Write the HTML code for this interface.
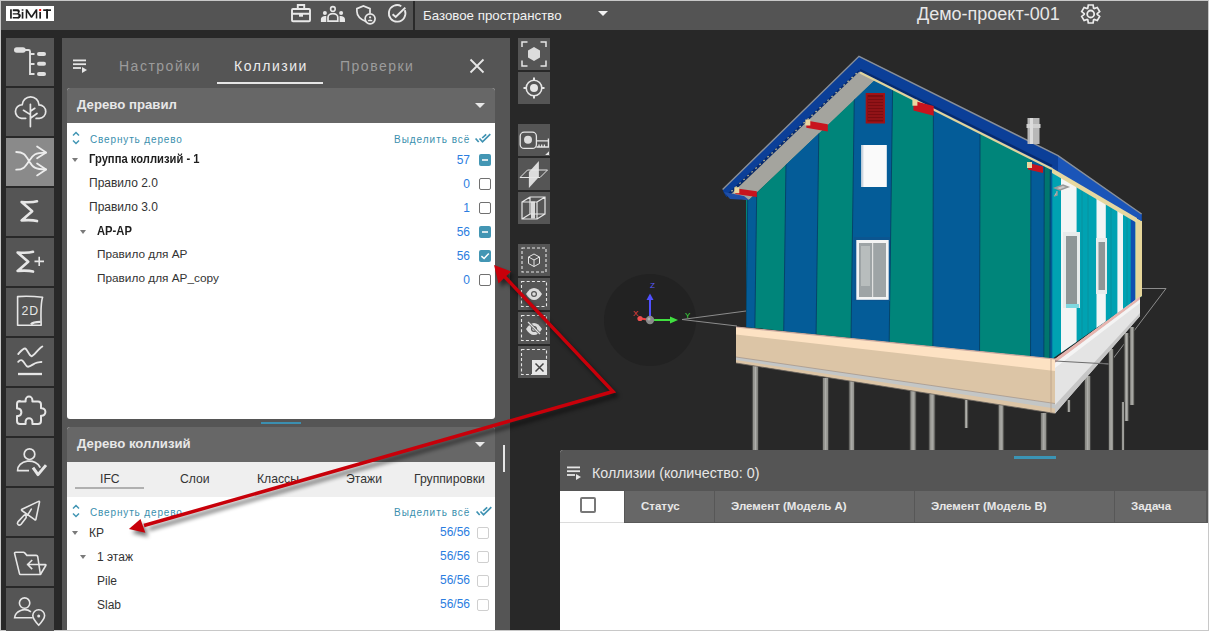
<!DOCTYPE html>
<html><head><meta charset="utf-8">
<style>
*{box-sizing:border-box;margin:0;padding:0}
html,body{width:1209px;height:631px;overflow:hidden;background:#c8c8c8;font-family:"Liberation Sans",sans-serif}
.a{position:absolute}
#hdr{left:1px;top:1px;width:1207px;height:29px;background:#545454}
#main{left:1px;top:30px;width:1207px;height:600px;background:#282828}
.sb{position:absolute;left:6px;width:48px;height:48px;background:#555}
.sb svg{position:absolute;left:0;top:0}
.tb{position:absolute;left:518px;width:32px;height:32px;background:#555}
.tb svg{position:absolute;left:0;top:0}
.t{position:absolute;white-space:nowrap;line-height:1}
.row{position:absolute;white-space:nowrap;line-height:1;font-size:12px;color:#333}
.num{position:absolute;white-space:nowrap;line-height:1;font-size:12px;color:#2b7de0;text-align:right}
.cb{position:absolute;width:12px;height:12px;border:1.8px solid #707070;border-radius:2px;background:#fff}
.cbl{position:absolute;width:12px;height:12px;border:1.5px solid #cfcfcf;border-radius:2px;background:#fff}
.cbf{position:absolute;width:12px;height:12px;border-radius:2px;background:#4396b4}
.caret{position:absolute;width:0;height:0;border-left:3.5px solid transparent;border-right:3.5px solid transparent;border-top:4px solid #7a7a7a}
</style></head><body>
<div id="hdr" class="a"></div>
<div id="main" class="a"></div>

<!-- logo -->
<div class="a" style="left:6px;top:6px;width:48px;height:15px;background:#fff"></div>
<svg class="a" style="left:6px;top:6px" width="48" height="15" viewBox="0 0 48 15">
 <g fill="#1e1e1e">
  <rect x="4.1" y="3.3" width="1.7" height="9.3"/>
  <path d="M6.8 3.3h4.2a2.6 2.1 0 0 1 1.6 3.9 2.8 2.7 0 0 1-1.4 5.4H6.8v-1.5h4.4a1.35 1.25 0 0 0 0-2.5H6.8V7.3h4a1.1 1 0 0 0 0-2.1H6.8z"/>
  <rect x="15.7" y="3.3" width="1.7" height="1.4"/>
  <rect x="15.7" y="5.9" width="1.7" height="6.7"/>
  <path d="M19.7 12.6V3.3h1.6l4.2 6.5 4.3-6.5h1.5v9.3h-1.5V6.2l-3.7 5.6h-1.2l-3.7-5.6v6.4z"/>
  <rect x="33.3" y="5.9" width="1.7" height="6.7"/>
  <rect x="37.2" y="3.3" width="7.8" height="1.7"/>
  <rect x="40.1" y="3.3" width="1.9" height="9.3"/>
 </g>
 <rect x="33.2" y="3" width="1.9" height="2" fill="#f00"/>
</svg>

<!-- header icons -->
<svg class="a" style="left:280px;top:0" width="135" height="30" viewBox="280 0 135 30" fill="none" stroke="#e8e8e8" stroke-width="1.9">
 <rect x="292" y="9" width="18" height="12.2" rx="1"/>
 <path d="M297.8 9V5h6.4v4M292 13.8h18"/>
 <rect x="299" y="13.5" width="4" height="3.2" fill="#e8e8e8" stroke="none"/>
 <circle cx="332.9" cy="8.9" r="2.3" stroke-width="1.6"/>
 <path d="M328 21.2v-4a4.9 3.6 0 0 1 9.8 0v4z" stroke-width="1.7"/>
 <circle cx="324.9" cy="12.9" r="2" fill="#e8e8e8" stroke="none"/>
 <circle cx="341.1" cy="12.9" r="2" fill="#e8e8e8" stroke="none"/>
 <path d="M320.9 22v-2.5c0-2 1.5-3.4 5.4-3.4V22zM345 22v-2.5c0-2-1.5-3.4-5.4-3.4V22z" fill="#e8e8e8" stroke="none"/>
 <path d="M366.3 21.8c-5.5-2.2-9.4-5.6-9.4-10.5V8.6l6.5-2.7 6.6 2.7v4.6" stroke-width="1.7"/>
 <circle cx="370.1" cy="18.8" r="5" stroke-width="1.7"/>
 <circle cx="370.1" cy="17.3" r="1.1" fill="#e8e8e8" stroke="none"/>
 <path d="M367.6 21.3a2.5 1.7 0 0 1 5 0z" fill="#e8e8e8" stroke="none"/>
 <path d="M404.8 10.2a8.3 8.3 0 1 1-3.5-4" stroke-width="1.8"/>
 <path d="M392.6 14.2l3.1 2.8 9.6-9.4" stroke-width="2"/>
</svg>
<div class="a" style="left:413px;top:1px;width:2px;height:29px;background:#2a2a2a"></div>
<div class="t" style="left:423px;top:9px;font-size:13.3px;color:#f2f2f2">Базовое пространство</div>
<div class="a" style="left:598px;top:11px;width:0;height:0;border-left:5px solid transparent;border-right:5px solid transparent;border-top:5.5px solid #f2f2f2"></div>
<div class="t" style="left:917px;top:5px;font-size:18px;color:#e8e8e8">Демо-проект-001</div>
<svg class="a" style="left:1070px;top:0" width="40" height="30" viewBox="1070 0 40 30">
 <path fill="none" stroke="#ececec" stroke-width="1.7" stroke-linejoin="miter" d="M1087.80 8.18 L1088.30 5.02 L1093.10 5.02 L1093.60 8.18 L1094.29 8.58 L1097.28 7.43 L1099.68 11.59 L1097.19 13.60 L1097.19 14.40 L1099.68 16.41 L1097.28 20.57 L1094.29 19.42 L1093.60 19.82 L1093.10 22.98 L1088.30 22.98 L1087.80 19.82 L1087.11 19.42 L1084.12 20.57 L1081.72 16.41 L1084.21 14.40 L1084.21 13.60 L1081.72 11.59 L1084.12 7.43 L1087.11 8.58Z"/>
 <circle cx="1090.7" cy="14" r="3.5" fill="none" stroke="#ececec" stroke-width="1.8"/>
</svg>

<!-- SIDEBAR -->
<div class="sb" style="top:38px"><svg width="48" height="48" viewBox="0 0 48 48" fill="#e0e0e0" stroke="#e0e0e0">
 <rect x="8" y="9.3" width="11.7" height="5.5" rx="2.75" stroke="none"/>
 <path d="M18 12h4.5a1.5 1.5 0 0 1 1.5 1.5V36h4.5M24 16h4.5M24 26h4.5" fill="none" stroke-width="1.9"/>
 <rect x="31" y="14" width="9" height="4" rx="2" stroke="none"/>
 <rect x="31" y="23.8" width="9" height="4" rx="2" stroke="none"/>
 <rect x="31" y="34" width="9" height="4" rx="2" stroke="none"/>
</svg></div>
<div class="sb" style="top:88px"><svg width="48" height="48" viewBox="0 0 48 48" fill="none" stroke="#e6e6e6" stroke-width="1.7" stroke-linecap="round">
 <path d="M19.7 30.3H15.5A6.8 6.8 0 0 1 16.21 16.74A8.4 8.4 0 0 1 32.99 16.81A6.8 6.8 0 0 1 33.3 30.4H30.1"/>
 <path d="M24.4 16.3V38.6M17.5 22.3l6.9 4.3M24.4 23.2l4.4-2.9M24.4 30.2l6.6-4.7"/>
</svg></div>
<div class="sb" style="top:138px;background:#8a8a8a"><svg width="48" height="48" viewBox="0 0 48 48" fill="none" stroke="#ececec" stroke-width="1.8" stroke-linecap="round" stroke-linejoin="round">
 <path d="M10.2 14c7 0 9 2.5 12.8 9s6 8.4 17 8.4M10.2 31.7c7 0 9-2.5 12.8-8.7s6-8.4 17-8.4"/>
 <path d="M31.1 8.4l9 6.2-9 5.7M31.1 25.5l9 5.9-9 6"/>
</svg></div>
<div class="sb" style="top:188px"><svg width="48" height="48" viewBox="0 0 48 48" fill="none" stroke="#e6e6e6" stroke-width="2.6" stroke-linejoin="round" stroke-linecap="round">
 <path d="M31 13.3C27 14.5 20 14.3 15.6 14L26.2 23.2L15.6 32.4C20 32.1 27 31.9 31 33.1"/>
</svg></div>
<div class="sb" style="top:238px"><svg width="48" height="48" viewBox="0 0 48 48" fill="none" stroke="#e6e6e6" stroke-width="2.6" stroke-linejoin="round" stroke-linecap="round">
 <path d="M27 13.8C23 15 16 14.8 11.6 14.5L22.2 23.7L11.6 32.9C16 32.6 23 32.4 27 33.6"/>
 <path d="M28.5 23.4h9.5M33.2 18.7v9.4" stroke-width="1.6" stroke-linecap="butt"/>
</svg></div>
<div class="sb" style="top:288px"><svg width="48" height="48" viewBox="0 0 48 48" fill="none" stroke="#e6e6e6" stroke-width="1.6" stroke-linejoin="round">
 <path d="M11.6 8.6C20 8 28 8.3 36.6 9.2C35 14 34.6 22 35.2 37.3H11.6z"/>
 <path d="M25 36.3C27 34.2 30 33.8 34.6 33.9" stroke-width="2.4"/>
 <text x="15.6" y="27" font-family="Liberation Sans" font-size="12.3" letter-spacing="0.8" fill="#e6e6e6" stroke="none">2D</text>
</svg></div>
<div class="sb" style="top:338px"><svg width="48" height="48" viewBox="0 0 48 48" fill="none" stroke="#e6e6e6" stroke-width="1.9" stroke-linecap="round" stroke-linejoin="round">
 <path d="M12.3 16C15 13 17 10.3 19 10.5C21 10.7 23 17.5 25.3 18.2C27.5 18.5 32 11 36.3 8.5"/>
 <path d="M12.2 23.8C13.5 22.3 14.5 21.8 16 22.3C18.5 23.3 19.5 29 22 28.8C25 28.5 28 25.2 31 24.6C33 24.2 34 24.2 35.4 24"/>
 <path d="M12 36h24" stroke-linecap="butt" stroke-width="2.3"/>
</svg></div>
<div class="sb" style="top:388px"><svg width="48" height="48" viewBox="0 0 48 48" fill="none" stroke="#e6e6e6" stroke-width="2" stroke-linejoin="round">
 <path d="M14 13.6h5.6v-1.6a3.4 3.4 0 0 1 6.8 0v1.6h5.6a3 3 0 0 1 3 3v3.6h.6a3.8 3.8 0 0 1 0 7.6h-.6v5.1a3 3 0 0 1-3 3h-5.6v-2.3a3.4 3.4 0 0 0-6.8 0v2.3H14a3 3 0 0 1-3-3v-4.8h1.2a3.8 3.8 0 0 0 0-7.5H11v-4.6a3 3 0 0 1 3-3z"/>
</svg></div>
<div class="sb" style="top:438px"><svg width="48" height="48" viewBox="0 0 48 48" fill="none" stroke="#e6e6e6" stroke-width="1.7">
 <circle cx="23.5" cy="16.2" r="5.3"/>
 <path d="M23 32.6H11.6A11.6 9.2 0 0 1 34.3 29.6"/>
 <path d="M27 29.6l5 7 8-9.5" stroke-width="3" stroke-linejoin="round"/>
</svg></div>
<div class="sb" style="top:488px"><svg width="48" height="48" viewBox="0 0 48 48" fill="none" stroke="#e6e6e6" stroke-width="1.6" stroke-linejoin="round" stroke-linecap="round">
 <path d="M16 21.3L32.6 13.4C33.2 13.1 33.6 13.5 33.5 14.1L29.9 31.3C29.8 32 29.2 32.2 28.7 31.7L15.8 22.5C15.3 22.1 15.4 21.6 16 21.3z"/>
 <path d="M25.3 21.2L21.6 27.2L19.3 26.8"/>
 <path d="M17.6 27.7c.9-.9 2.3-.6 2.6.6.2.6 0 1.2-.3 1.6l-4.8 6.4c-.8 1-2.3 1.1-3.1.2-.7-.7-.7-1.8-.1-2.6z"/>
</svg></div>
<div class="sb" style="top:538px"><svg width="48" height="48" viewBox="0 0 48 48" fill="none" stroke="#e6e6e6" stroke-width="1.6" stroke-linejoin="round">
 <path d="M9.8 14.2h7.6c.6 0 1 .3 1.3.7l2.2 2.5h9.3c.8 0 1.3.4 1.5 1.1L34.4 36.5H14.6c-.6 0-1-.3-1.1-.9L8.6 15.6c-.2-.8.4-1.4 1.2-1.4z"/>
 <path d="M33.2 26.6h6.2c.5 0 .7.5.4.9l-5.4 9"/>
 <path d="M20.8 26.5h12.8M26.2 22l-4.6 4.5 4.6 4.6"/>
</svg></div>
<div class="sb" style="top:588px"><svg width="48" height="48" viewBox="0 0 48 48" fill="none" stroke="#e6e6e6" stroke-width="1.6">
 <circle cx="18.6" cy="15.1" r="5.2"/>
 <path d="M26.6 29.8H8.6A10 8.8 0 0 1 25 23.8"/>
 <path d="M38.6 27.6c0-3.3-2.6-5.8-5.9-5.8s-5.9 2.5-5.9 5.8c0 3 2.6 6.2 5.9 9.6 3.3-3.4 5.9-6.6 5.9-9.6z"/>
 <circle cx="32.7" cy="27.9" r="1.5" fill="#e6e6e6" stroke="none"/>
</svg></div>

<!-- PANEL -->
<div class="a" style="left:62px;top:38px;width:448px;height:592px;background:#555"></div>
<svg class="a" style="left:72px;top:58px" width="18" height="16" viewBox="0 0 18 16" fill="#e6e6e6">
 <rect x="1" y="1.5" width="13" height="1.8"/><rect x="1" y="5.3" width="13" height="1.8"/><rect x="1" y="9.1" width="8" height="1.8"/>
 <path d="M10 9v6l5-3z"/>
</svg>
<div class="t" style="left:119px;top:59px;font-size:14px;letter-spacing:1.5px;color:#9c9c9c">Настройки</div>
<div class="t" style="left:234px;top:59px;font-size:14px;letter-spacing:1.5px;color:#ececec">Коллизии</div>
<div class="t" style="left:340px;top:59px;font-size:14px;letter-spacing:1.5px;color:#9c9c9c">Проверки</div>
<div class="a" style="left:217px;top:82px;width:106px;height:2px;background:#e6e6e6"></div>
<svg class="a" style="left:469px;top:58px" width="16" height="16" viewBox="0 0 16 16"><path d="M1.5 1.5l13 13M14.5 1.5l-13 13" stroke="#e6e6e6" stroke-width="1.8"/></svg>

<!-- sub-panel 1 -->
<div class="a" style="left:67px;top:88px;width:428px;height:331px;background:#fff;border-radius:3px;overflow:hidden">
 <div class="a" style="left:0;top:0;width:428px;height:35px;background:#676767"></div>
</div>
<div class="t" style="left:77px;top:98px;font-size:13.2px;font-weight:bold;color:#e8e8e8">Дерево правил</div>
<div class="a" style="left:475px;top:103px;border-left:5px solid transparent;border-right:5px solid transparent;border-top:5px solid #e8e8e8"></div>

<svg class="a" style="left:71px;top:131px" width="10" height="14" viewBox="0 0 10 14" fill="none" stroke="#4396b4" stroke-width="1.5"><path d="M2 4.5l3-3 3 3M2 9.5l3 3 3-3"/></svg>
<div class="t" style="left:90px;top:134.7px;font-size:10px;letter-spacing:0.85px;color:#3a8fae">Свернуть дерево</div>
<div class="t" style="left:394px;top:134.7px;font-size:10px;letter-spacing:0.97px;color:#3a8fae">Выделить всё</div>
<svg class="a" style="left:474px;top:132px" width="18" height="12" viewBox="0 0 18 12" fill="none" stroke="#3f92b2" stroke-width="1.7"><path d="M1.6 6.5L4.7 10M5.5 6.5L8.5 9.8L16.3 2.2M8.2 6L12.2 2.3"/></svg>

<div class="caret" style="left:72px;top:158px"></div>
<div class="row" style="left:89px;top:153px;font-weight:bold;font-size:12.2px;color:#1e1e1e;transform:scaleX(0.92);transform-origin:0 0">Группа коллизий - 1</div>
<div class="num" style="left:420px;width:50px;top:154px">57</div>
<div class="cbf" style="left:479px;top:154px"><div class="a" style="left:2.5px;top:5px;width:6.5px;height:2px;background:#d6e6ec"></div></div>

<div class="row" style="left:89px;top:177px">Правило 2.0</div>
<div class="num" style="left:420px;width:50px;top:178px">0</div>
<div class="cb" style="left:479px;top:178px"></div>

<div class="row" style="left:89px;top:201px">Правило 3.0</div>
<div class="num" style="left:420px;width:50px;top:202px">1</div>
<div class="cb" style="left:479px;top:202px"></div>

<div class="caret" style="left:80px;top:230px"></div>
<div class="row" style="left:97px;top:225px;font-weight:bold;font-size:12.2px;color:#1e1e1e;transform:scaleX(0.92);transform-origin:0 0">АР-АР</div>
<div class="num" style="left:420px;width:50px;top:226px">56</div>
<div class="cbf" style="left:479px;top:226px"><div class="a" style="left:2.5px;top:5px;width:6.5px;height:2px;background:#d6e6ec"></div></div>

<div class="row" style="left:97px;top:249px;font-size:11.8px">Правило для АР</div>
<div class="num" style="left:420px;width:50px;top:250px">56</div>
<div class="cbf" style="left:479px;top:250px"><svg style="display:block" width="12" height="12" viewBox="0 0 12 12"><path d="M2.4 6.1L5.1 8.5L9.8 3.4" fill="none" stroke="#fff" stroke-width="1.5"/></svg></div>

<div class="row" style="left:97px;top:273px;font-size:11.8px">Правило для АР_copy</div>
<div class="num" style="left:420px;width:50px;top:274px">0</div>
<div class="cb" style="left:479px;top:274px"></div>

<div class="a" style="left:261px;top:422px;width:40px;height:2px;background:#3b8fb0"></div>

<!-- sub-panel 2 -->
<div class="a" style="left:67px;top:427px;width:428px;height:203px;background:#fff;border-radius:3px 3px 0 0;overflow:hidden">
 <div class="a" style="left:0;top:0;width:428px;height:35px;background:#676767"></div>
 <div class="a" style="left:0;top:35px;width:428px;height:35px;background:#efefef"></div>
</div>
<div class="t" style="left:77px;top:437px;font-size:13.2px;font-weight:bold;color:#e8e8e8">Дерево коллизий</div>
<div class="a" style="left:475px;top:442px;border-left:5px solid transparent;border-right:5px solid transparent;border-top:5px solid #e8e8e8"></div>
<div class="a" style="left:503px;top:445px;width:2px;height:27px;background:#e6e6e6"></div>

<div class="t" style="left:100px;top:473px;font-size:12.2px;color:#333">IFC</div>
<div class="a" style="left:75px;top:487px;width:69px;height:2px;background:#b0b0b0"></div>
<div class="t" style="left:180px;top:473px;font-size:12.2px;color:#333">Слои</div>
<div class="t" style="left:257px;top:473px;font-size:12.2px;color:#333">Классы</div>
<div class="t" style="left:346px;top:473px;font-size:12.2px;color:#333">Этажи</div>
<div class="t" style="left:414px;top:473px;font-size:12.2px;color:#333">Группировки</div>

<svg class="a" style="left:71px;top:504px" width="10" height="14" viewBox="0 0 10 14" fill="none" stroke="#4396b4" stroke-width="1.5"><path d="M2 4.5l3-3 3 3M2 9.5l3 3 3-3"/></svg>
<div class="t" style="left:90px;top:507.7px;font-size:10px;letter-spacing:0.85px;color:#3a8fae">Свернуть дерево</div>
<div class="t" style="left:394px;top:507.7px;font-size:10px;letter-spacing:0.97px;color:#3a8fae">Выделить всё</div>
<svg class="a" style="left:475px;top:505px" width="18" height="12" viewBox="0 0 18 12" fill="none" stroke="#3f92b2" stroke-width="1.7"><path d="M1.6 6.5L4.7 10M5.5 6.5L8.5 9.8L16.3 2.2M8.2 6L12.2 2.3"/></svg>

<div class="caret" style="left:72px;top:531px"></div>
<div class="row" style="left:89px;top:527px">КР</div>
<div class="num" style="left:400px;width:70px;top:526px">56/56</div>
<div class="cbl" style="left:477px;top:527px"></div>

<div class="caret" style="left:80px;top:555px"></div>
<div class="row" style="left:97px;top:551px">1 этаж</div>
<div class="num" style="left:400px;width:70px;top:550px">56/56</div>
<div class="cbl" style="left:477px;top:551px"></div>

<div class="row" style="left:97px;top:575px">Pile</div>
<div class="num" style="left:400px;width:70px;top:574px">56/56</div>
<div class="cbl" style="left:477px;top:575px"></div>

<div class="row" style="left:97px;top:599px">Slab</div>
<div class="num" style="left:400px;width:70px;top:598px">56/56</div>
<div class="cbl" style="left:477px;top:599px"></div>

<!-- HOUSE placeholder -->
<!-- HOUSE -->
<svg class="a" style="left:0;top:0" width="1209" height="631" viewBox="0 0 1209 631">
<circle cx="650" cy="320" r="46" fill="#222"/>
<g stroke="#8c8c8c" stroke-width="1" fill="none">
<path d="M682 319.5L746 311M682 319.5L737 326"/>
<path d="M1142 288.5H1166L1109 364L1055 359"/>
</g>
<rect x="751.8" y="366" width="7" height="84" fill="#3c3c3a"/>
<rect x="752.8" y="366" width="5" height="84" fill="#94948f"/>
<rect x="754.8" y="366" width="1.2" height="84" fill="#b0b0ac"/>
<rect x="822.1" y="378" width="7" height="72" fill="#3c3c3a"/>
<rect x="823.1" y="378" width="5" height="72" fill="#94948f"/>
<rect x="825.1" y="378" width="1.2" height="72" fill="#b0b0ac"/>
<rect x="848.5" y="381" width="6.5" height="69" fill="#3c3c3a"/>
<rect x="849.5" y="381" width="4.5" height="69" fill="#94948f"/>
<rect x="851.2" y="381" width="1.2" height="69" fill="#b0b0ac"/>
<rect x="909.5" y="391" width="7" height="59" fill="#3c3c3a"/>
<rect x="910.5" y="391" width="5" height="59" fill="#94948f"/>
<rect x="912.5" y="391" width="1.2" height="59" fill="#b0b0ac"/>
<rect x="928.5" y="394" width="7" height="56" fill="#3c3c3a"/>
<rect x="929.5" y="394" width="5" height="56" fill="#94948f"/>
<rect x="931.5" y="394" width="1.2" height="56" fill="#b0b0ac"/>
<rect x="964.0" y="400" width="4.5" height="28" fill="#3c3c3a"/>
<rect x="965.0" y="400" width="2.5" height="28" fill="#94948f"/>
<rect x="965.8" y="400" width="1.2" height="28" fill="#b0b0ac"/>
<rect x="997.8" y="405" width="6.5" height="45" fill="#3c3c3a"/>
<rect x="998.8" y="405" width="4.5" height="45" fill="#94948f"/>
<rect x="1000.5" y="405" width="1.2" height="45" fill="#b0b0ac"/>
<rect x="1040.2" y="413" width="7" height="37" fill="#3c3c3a"/>
<rect x="1041.2" y="413" width="5" height="37" fill="#94948f"/>
<rect x="1043.2" y="413" width="1.2" height="37" fill="#b0b0ac"/>
<rect x="1066.8" y="400" width="4" height="12" fill="#3c3c3a"/>
<rect x="1067.8" y="400" width="2" height="12" fill="#94948f"/>
<rect x="1068.3" y="400" width="1.2" height="12" fill="#b0b0ac"/>
<rect x="1084.1" y="376" width="7" height="74" fill="#3c3c3a"/>
<rect x="1085.1" y="376" width="5" height="74" fill="#94948f"/>
<rect x="1087.1" y="376" width="1.2" height="74" fill="#b0b0ac"/>
<rect x="1108.0" y="349" width="6" height="101" fill="#3c3c3a"/>
<rect x="1109.0" y="349" width="4" height="101" fill="#94948f"/>
<rect x="1110.5" y="349" width="1.2" height="101" fill="#b0b0ac"/>
<rect x="1123.7" y="333" width="5.5" height="88" fill="#3c3c3a"/>
<rect x="1124.7" y="333" width="3.5" height="88" fill="#94948f"/>
<rect x="1125.9" y="333" width="1.2" height="88" fill="#b0b0ac"/>
<rect x="1129.2" y="327" width="5.5" height="78" fill="#3c3c3a"/>
<rect x="1130.2" y="327" width="3.5" height="78" fill="#94948f"/>
<rect x="1131.5" y="327" width="1.2" height="78" fill="#b0b0ac"/>
<rect x="1121.2" y="402" width="3.5" height="48" fill="#3c3c3a"/>
<rect x="1122.2" y="402" width="1.5" height="48" fill="#94948f"/>
<rect x="1122.5" y="402" width="1.2" height="48" fill="#b0b0ac"/>
<polygon points="722.6,189.5 859.0,56.3 860.0,71.0 726.4,197.0 724.0,193.0" fill="#0b3f98"/>
<polyline points="727.0,196.0 860.0,71.0" fill="none" stroke="#072a6e" stroke-width="2.6"/>
<polygon points="728.0,197.0 860.0,71.0 876.0,80.0 749.0,200.0" fill="#a4a49e"/>
<polyline points="727.5,195.0 859.5,70.5" fill="none" stroke="#d6cc98" stroke-width="1.2" stroke-dasharray="1.5 4"/>
<polygon points="724.0,192.0 730.0,199.0 749.0,200.0 744.0,196.0" fill="#1f4fa8"/>
<defs><clipPath id="fw"><polygon points="746.0,200.0 749.0,200.0 876.0,79.0 1054.0,169.5 1054.0,359.0 746.0,327.0"/></clipPath>
<clipPath id="sw"><polygon points="1052.0,170.0 1142.0,221.0 1142.0,296.0 1052.0,359.0"/></clipPath></defs>
<g clip-path="url(#fw)">
<rect x="740" y="60" width="320" height="310" fill="#00857a"/>
<polygon points="749.6,60.0 758.5,60.0 754.3,370.0 745.4,370.0" fill="#045c98"/>
<polygon points="787.4,60.0 819.8,60.0 815.6,370.0 783.2,370.0" fill="#045c98"/>
<polygon points="854.8,60.0 893.0,60.0 888.8,370.0 850.6,370.0" fill="#045c98"/>
<polygon points="933.5,60.0 980.2,60.0 979.5,370.0 932.8,370.0" fill="#045c98"/>
<polygon points="1031.2,60.0 1044.5,60.0 1043.8,370.0 1030.5,370.0" fill="#045c98"/>
<polygon points="1050.5,60.0 1054.5,60.0 1053.8,370.0 1049.8,370.0" fill="#045c98"/>
<polygon points="1044,60 1050,60 1050,370 1044,370" fill="#00766e"/>
<line x1="749.6" y1="60" x2="745.4" y2="370" stroke="#063f66" stroke-width="0.9"/>
<line x1="758.5" y1="60" x2="754.3" y2="370" stroke="#063f66" stroke-width="0.9"/>
<line x1="787.4" y1="60" x2="783.2" y2="370" stroke="#063f66" stroke-width="0.9"/>
<line x1="819.8" y1="60" x2="815.6" y2="370" stroke="#063f66" stroke-width="0.9"/>
<line x1="854.8" y1="60" x2="850.6" y2="370" stroke="#063f66" stroke-width="0.9"/>
<line x1="893.0" y1="60" x2="888.8" y2="370" stroke="#063f66" stroke-width="0.9"/>
<line x1="933.5" y1="60" x2="932.8" y2="370" stroke="#063f66" stroke-width="0.9"/>
<line x1="980.2" y1="60" x2="979.5" y2="370" stroke="#063f66" stroke-width="0.9"/>
<line x1="1031.2" y1="60" x2="1030.5" y2="370" stroke="#063f66" stroke-width="0.9"/>
<line x1="1044.5" y1="60" x2="1043.8" y2="370" stroke="#063f66" stroke-width="0.9"/>
<line x1="1050.5" y1="60" x2="1049.8" y2="370" stroke="#063f66" stroke-width="0.9"/>
<line x1="1054.5" y1="60" x2="1053.8" y2="370" stroke="#063f66" stroke-width="0.9"/>
</g>
<g clip-path="url(#sw)">
<rect x="1050" y="160" width="100" height="210" fill="#00a2b2"/>
<rect x="1050" y="160" width="2.3" height="210" fill="#045c98"/>
<rect x="1061" y="160" width="15.6" height="210" fill="#f3f5f5"/>
<rect x="1096.5" y="160" width="9.3" height="210" fill="#f3f5f5"/>
<rect x="1117.4" y="160" width="5.6" height="210" fill="#f3f5f5"/>
<rect x="1130.7" y="160" width="4.7" height="210" fill="#0f4fb0"/>
<rect x="1135.4" y="160" width="6.6" height="210" fill="#e6d69a"/>
<path d="M1082 170V340M1088 170V340M1111 170V340M1127 170V340" stroke="#0a8e9a" stroke-width="0.8"/>
</g>
<polygon points="859.0,56.3 1058.0,155.6 1141.6,214.0 1141.6,221.0 1058.0,172.0 859.0,71.5" fill="#0b3f98"/>
<polygon points="1058.0,155.6 1141.6,214.0 1141.6,221.0 1058.0,175.0" fill="#1a55b8"/>
<polyline points="722.6,189.5 859.0,56.3 1058.0,155.6 1141.6,214.0" fill="none" stroke="#8a9098" stroke-width="1.4"/>
<polyline points="860.0,70.0 1052.0,166.0" fill="none" stroke="#072a6e" stroke-width="2.2"/>
<polyline points="860.0,72.5 1052.0,169.0" fill="none" stroke="#e0d49c" stroke-width="2.2"/>
<polygon points="1052.0,168.0 1137.0,218.0 1137.0,223.0 1052.0,173.0" fill="#e6d8a0"/>
<rect x="1027.5" y="118" width="12" height="26" fill="#b8b8b8"/><rect x="1026.5" y="124" width="14" height="4" fill="#d0d0d0"/><rect x="1030" y="118" width="3" height="26" fill="#dcdcdc"/>
<polygon points="735.3,188.2 756.8,191.3 756.8,197.0 735.3,193.9" fill="#c8141e"/>
<rect x="734.3" y="187.2" width="5" height="6" fill="#ead7a0"/>
<polygon points="806.3,120.5 827.8,124.3 827.8,131.5 806.3,127.7" fill="#c8141e"/>
<rect x="805.3" y="119.5" width="5" height="6" fill="#ead7a0"/>
<polygon points="913.4,100.7 933.7,106.0 933.7,115.7 913.4,110.5" fill="#c8141e"/>
<rect x="912.4" y="99.7" width="5" height="6" fill="#ead7a0"/>
<polygon points="1028.0,163.0 1043.0,166.5 1043.0,173.0 1028.0,169.5" fill="#c8141e"/>
<rect x="1027" y="162" width="5" height="6" fill="#ead7a0"/>
<rect x="865.7" y="93" width="19.3" height="30.5" fill="#a01216"/><rect x="867.5" y="95" width="15.7" height="26.5" fill="#7a0c10"/>
<path d="M868 98h15M868 101h15M868 104h15M868 107h15M868 110h15M868 113h15M868 116h15M868 119h15" stroke="#a81a1e" stroke-width="1"/>
<rect x="861.4" y="145" width="25.4" height="42" fill="#fafafa"/><rect x="861.4" y="145" width="2" height="42" fill="#d0d8e0"/>
<rect x="854" y="237" width="36" height="64" fill="#0b5590"/>
<rect x="856.3" y="240" width="32.4" height="59.8" fill="#f4f4f4"/><rect x="859" y="243" width="27" height="54" fill="#9ea4a6"/><rect x="872" y="243" width="1.2" height="54" fill="#e0e0e0"/><rect x="861" y="246" width="9" height="40" fill="#b8bdbd"/>
<rect x="1063" y="232" width="17" height="76" fill="#e8ecec"/><rect x="1066" y="236" width="11" height="68" fill="#8e9697"/><rect x="1066" y="304" width="13" height="4" fill="#7fd8e0"/>
<rect x="1096" y="238" width="11" height="56" fill="#e8ecec"/><rect x="1098.5" y="242" width="6.5" height="48" fill="#8e9697"/>
<path d="M1055 188l8-3 5 2-8 3zM1057 191v4l-3 1" stroke="#999" stroke-width="1.5" fill="#c8c8c8"/>
<polygon points="736.0,327.0 1055.0,359.0 1055.0,413.5 736.0,363.0" fill="#dcc5a6"/>
<polygon points="736.0,327.0 1055.0,359.0 1055.0,371.0 736.0,334.5" fill="#fde2c3"/>
<polygon points="736.0,357.0 1055.0,403.5 1055.0,408.5 736.0,360.0" fill="#c3c6c6"/>
<polyline points="736.0,327.0 1055.0,359.0" fill="none" stroke="#c8a8a0" stroke-width="1.2"/>
<polyline points="736.0,357.0 1055.0,403.5" fill="none" stroke="#9a8a80" stroke-width="0.6"/>
<polyline points="736.0,363.0 1055.0,413.5" fill="none" stroke="#6a6560" stroke-width="0.8"/>
<path d="M1051 359V413" stroke="#b8a088" stroke-width="0.8"/>
<polygon points="1055.0,359.0 1140.0,296.5 1140.0,316.0 1055.0,413.5" fill="#e4e4e4"/>
<polygon points="1055.0,359.0 1140.0,296.5 1140.0,299.5 1055.0,363.0" fill="#e6b4ae"/>
<polygon points="1055.0,363.0 1140.0,299.5 1140.0,303.0 1055.0,368.0" fill="#f4f4f4"/>
<polygon points="1055.0,405.0 1140.0,313.0 1140.0,316.0 1055.0,413.5" fill="#c6c6c6"/>
<path d="M1055 361L1109 364" stroke="#6c6c6c" stroke-width="1"/>
<g>
<path d="M650 320V298" stroke="#5050ff" stroke-width="2"/><path d="M646.5 300L650 293.5L653.5 300z" fill="#5050ff"/>
<text x="650" y="288" font-family="Liberation Sans" font-size="8" fill="#5a5aff">Z</text>
<path d="M650 320H672" stroke="#40e040" stroke-width="2"/><path d="M670 316.5L678 320L670 323.5z" fill="#40e040"/>
<text x="685" y="318" font-family="Liberation Sans" font-size="8" fill="#40e040">Y</text>
<path d="M650 320L638 318" stroke="#f04040" stroke-width="2"/><circle cx="640" cy="318.5" r="2.6" fill="#f05050"/>
<text x="633" y="316" font-family="Liberation Sans" font-size="8" fill="#f04040">X</text>
<circle cx="650" cy="320" r="4.2" fill="#8a8a8a"/><circle cx="649" cy="319" r="1.5" fill="#b0b0b0"/>
</g>
</svg>
<!-- /HOUSE -->

<!-- TOOLBAR -->
<div class="tb" style="top:38px"><svg width="32" height="32" viewBox="0 0 32 32" fill="none" stroke="#e6e6e6" stroke-width="1.5">
 <path d="M4 9V4h5.5M22.5 4H28v5M28 22.5V28h-5.5M9.5 28H4v-5.5"/>
 <path d="M16 9l6 3.5v7l-6 3.5-6-3.5v-7z" fill="#dcdcdc" stroke="none"/>
</svg></div>
<div class="tb" style="top:72px"><svg width="32" height="32" viewBox="0 0 32 32" fill="none" stroke="#e6e6e6" stroke-width="1.6">
 <circle cx="16" cy="16" r="7.8"/>
 <circle cx="16" cy="16" r="4" fill="#e6e6e6" stroke="none"/>
 <path d="M16 5.5v3M16 23.5v3M5.5 16h3M23.5 16h3" stroke-width="2"/>
</svg></div>
<div class="tb" style="top:124px"><svg width="32" height="32" viewBox="0 0 32 32" fill="none" stroke="#e6e6e6" stroke-width="1.3">
 <rect x="2.2" y="8.2" width="16.2" height="16.2" rx="4"/>
 <circle cx="10" cy="15.8" r="4" fill="#dcdcdc" stroke="none"/>
 <path d="M18.4 16.8h12v6.2H18.4M21 20.5v2.5M23.7 20.5v2.5M26.4 20.5v2.5M30.4 14.5v8.5"/>
 <path d="M31 27.2v3.8h-3.8z" fill="#e6e6e6" stroke="none"/>
</svg></div>
<div class="tb" style="top:158px"><svg width="32" height="32" viewBox="0 0 32 32" fill="none" stroke="#e6e6e6" stroke-width="1">
 <path d="M10.9 14L20.9 3V19L10.9 30z" fill="#dcdcdc" stroke="none"/>
 <path d="M2 19.5l7.5-7.5h20l-7.5 7.5z"/>
</svg></div>
<div class="tb" style="top:192px"><svg width="32" height="32" viewBox="0 0 32 32" fill="none" stroke="#e6e6e6" stroke-width="1.2">
 <path d="M13 9v18M17 9v18" stroke-width="0"/>
 <path d="M13 9.5h4v17h-4z" fill="#d8d8d8" stroke="none"/>
 <path d="M4 10h15v17H4zM12 5h15v17H12zM4 10l8-5M19 10l8-5M19 27l8-5M4 27l8-5M12 5v17"/>
</svg></div>
<div class="tb" style="top:244px"><svg width="32" height="32" viewBox="0 0 32 32" fill="none" stroke="#e6e6e6" stroke-width="1.3">
 <rect x="4" y="4" width="24" height="24" stroke-dasharray="3 2" stroke-width="1.1"/>
 <path d="M16 10l5.5 3v6.5L16 22.5l-5.5-3V13zM10.5 13l5.5 3 5.5-3M16 16v6.5" stroke-width="1"/>
</svg></div>
<div class="tb" style="top:278px"><svg width="32" height="32" viewBox="0 0 32 32" fill="none" stroke="#e6e6e6" stroke-width="1.3">
 <rect x="3.5" y="3.5" width="25" height="25" stroke-dasharray="3 2.2" stroke-width="1.1"/>
 <path d="M8 16c2.5-4 5-6 8-6s5.5 2 8 6c-2.5 4-5 6-8 6s-5.5-2-8-6z" fill="#dcdcdc" stroke="none"/>
 <circle cx="16" cy="16" r="3" fill="#555" stroke="none"/>
 <circle cx="16" cy="16" r="1.8" fill="#dcdcdc" stroke="none"/>
</svg></div>
<div class="tb" style="top:312px"><svg width="32" height="32" viewBox="0 0 32 32" fill="none" stroke="#e6e6e6" stroke-width="1.3">
 <rect x="3.5" y="3.5" width="25" height="25" stroke-dasharray="3 2.2" stroke-width="1.1"/>
 <path d="M8 17c2.5-4 5-6 8-6s5.5 2 8 6c-2.5 4-5 6-8 6s-5.5-2-8-6z" fill="#dcdcdc" stroke="none"/>
 <circle cx="16" cy="17" r="3" fill="#555" stroke="none"/>
 <circle cx="16" cy="17" r="1.8" fill="#dcdcdc" stroke="none"/>
 <path d="M10 10l12 12" stroke="#555" stroke-width="2.6"/>
 <path d="M10 10l12 12" stroke="#dcdcdc" stroke-width="1.2"/>
</svg></div>
<div class="tb" style="top:346px"><svg width="32" height="32" viewBox="0 0 32 32" fill="none" stroke="#e6e6e6" stroke-width="1.3">
 <rect x="3.5" y="3.5" width="25" height="25" stroke-dasharray="3 2.2" stroke-width="1.1"/>
 <rect x="14" y="14" width="15" height="15" fill="#e6e6e6" stroke="none"/>
 <path d="M17.5 17.5l8 8M25.5 17.5l-8 8" stroke="#444" stroke-width="1.5"/>
</svg></div>


<!-- BOTTOM PANEL -->
<div class="a" style="left:560px;top:450px;width:648px;height:180px;background:#fff;border-radius:3px 0 0 0;overflow:hidden">
 <div class="a" style="left:0;top:0;width:648px;height:41px;background:#555"></div>
 <div class="a" style="left:64px;top:41px;width:584px;height:32px;background:#676767;border-left:1px solid #575757;border-bottom:1px solid #595959"></div>
 <div class="a" style="left:0;top:72px;width:64px;height:1px;background:#dcdcdc"></div>
 <div class="a" style="left:154px;top:41px;width:1px;height:32px;background:#575757"></div>
 <div class="a" style="left:354px;top:41px;width:1px;height:32px;background:#575757"></div>
 <div class="a" style="left:554px;top:41px;width:1px;height:32px;background:#575757"></div>
 <div class="a" style="left:646px;top:41px;width:2px;height:32px;background:#575757"></div>
</div>
<div class="a" style="left:1014px;top:456px;width:42px;height:3px;background:#3b94b5"></div>
<svg class="a" style="left:566px;top:465px" width="18" height="16" viewBox="0 0 18 16" fill="#e6e6e6">
 <rect x="1" y="1.5" width="13" height="1.8"/><rect x="1" y="5.3" width="13" height="1.8"/><rect x="1" y="9.1" width="8" height="1.8"/>
 <path d="M10 9v6l5-3z"/>
</svg>
<div class="t" style="left:592px;top:466px;font-size:14.3px;color:#e6e6e6">Коллизии (количество: 0)</div>
<div class="a" style="left:580px;top:497px;width:16px;height:16px;border:2px solid #777;border-radius:2px"></div>
<div class="t" style="left:641px;top:501px;font-size:11.5px;font-weight:bold;color:#e8e8e8">Статус</div>
<div class="t" style="left:731px;top:501px;font-size:11.5px;font-weight:bold;color:#e8e8e8">Элемент (Модель А)</div>
<div class="t" style="left:931px;top:501px;font-size:11.5px;font-weight:bold;color:#e8e8e8">Элемент (Модель В)</div>
<div class="t" style="left:1131px;top:501px;font-size:11.5px;font-weight:bold;color:#e8e8e8">Задача</div>

<!-- ARROWS placeholder -->
<!-- ARROWS -->
<svg class="a" style="left:0;top:0" width="1209" height="631" viewBox="0 0 1209 631">
<defs><filter id="sh" x="-20%" y="-20%" width="140%" height="140%"><feGaussianBlur stdDeviation="2"/></filter></defs>
<g transform="translate(3 4)" opacity="0.55" filter="url(#sh)">
<path d="M505 277L613 391.5L146 525" fill="none" stroke="#000" stroke-width="3.5" stroke-linejoin="miter"/>
<polygon points="494,265 498.5,283.5 511,271.5" fill="#000"/>
<polygon points="128.9,529 140.5,519.1 145.3,532.7" fill="#000"/>
</g>
<path d="M503 275L613 391.5L144 525.5" fill="none" stroke="#c8000a" stroke-width="3.5" stroke-linejoin="miter"/>
<polygon points="494,265 498.5,283.5 511,271.5" fill="#c8000a"/>
<polygon points="128.9,529 140.5,519.1 145.3,532.7" fill="#c8000a"/>
</svg>
<!-- /ARROWS -->
</body></html>
